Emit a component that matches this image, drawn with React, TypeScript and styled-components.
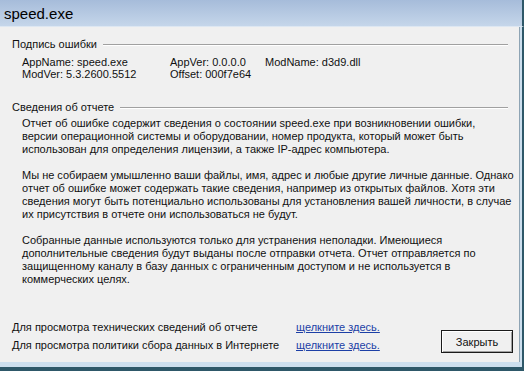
import React from 'react';
import styled, { createGlobalStyle } from 'styled-components';

const GlobalStyle = createGlobalStyle`
  html, body { margin: 0; padding: 0; background: #f0f0f0; }
  body { width: 524px; height: 371px; overflow: hidden; }
`;

const Window = styled.div`
  width: 524px;
  height: 371px;
  display: flex;
  flex-direction: column;
  font-family: "Liberation Sans", Arial, sans-serif;
  font-size: 11px;
  color: #111;
`;

const TitleBar = styled.div`
  height: 26px;
  flex: none;
  display: flex;
  align-items: center;
  padding-left: 4px;
  background: linear-gradient(#a6bcda, #c5d6ea);
  border-bottom: 1px solid #dde7f2;
  border-right: 2px solid #2e5869;
  font-size: 15px;
  color: #000;
`;

const Frame = styled.div`
  flex: 1;
  display: flex;
  flex-direction: column;
  background: #cddfee;
  border-right: 2px solid #2e5869;
  border-bottom: 4px solid #2e5869;
  padding: 0 2px 5px 0;
  min-height: 0;
`;

const Client = styled.div`
  flex: 1;
  background: #f0f0f0;
  border-right: 1px solid #8ea4b4;
  padding: 11px 6px 8px 12px;
  display: flex;
  flex-direction: column;
`;

const GroupHeader = styled.div<{ $top?: number }>`
  display: flex;
  align-items: center;
  gap: 6px;
  margin-right: 5px;
  margin-top: ${p => p.$top ?? 0}px;
  line-height: 13px;
`;

const Rule = styled.div`
  flex: 1;
  height: 0;
  border-top: 1px solid #a0a0a0;
  border-bottom: 1px solid #ffffff;
`;

const InfoGrid = styled.div`
  display: grid;
  grid-template-columns: 148px 95px auto;
  margin: 5px 0 0 10px;
  line-height: 12px;
  white-space: nowrap;
`;

const Paragraph = styled.p<{ $top: number }>`
  margin: ${p => p.$top}px 0 0 10px;
  line-height: 13px;
`;

const Line = styled.span`
  display: block;
  white-space: nowrap;
`;

const Spacer = styled.div`
  flex: 1;
`;

const Footer = styled.div`
  display: flex;
  align-items: flex-end;
  justify-content: space-between;
`;

const LinkGrid = styled.div`
  display: grid;
  grid-template-columns: 284px auto;
  grid-auto-rows: 18px;
  align-items: center;
  white-space: nowrap;
`;

const Link = styled.a`
  color: #1c3fa6;
  text-decoration: underline;
  cursor: pointer;
`;

const Button = styled.button`
  width: 72px;
  height: 23px;
  margin-bottom: 1px;
  padding: 0;
  background: #f0f0f0;
  border: 1px solid #1a1a1a;
  box-shadow: inset 1px 1px 0 #ffffff, inset -1px -1px 0 #a0a0a0;
  font-family: "Liberation Sans", Arial, sans-serif;
  font-size: 11px;
  color: #111;
`;

const paragraphs: string[][] = [
  [
    'Отчет об ошибке содержит сведения о состоянии speed.exe при возникновении ошибки,',
    'версии операционной системы и оборудовании, номер продукта, который может быть',
    'использован для определения лицензии, а также IP-адрес компьютера.',
  ],
  [
    'Мы не собираем умышленно ваши файлы, имя, адрес и любые другие личные данные. Однако',
    'отчет об ошибке может содержать такие сведения, например из открытых файлов. Хотя эти',
    'сведения могут быть потенциально использованы для установления вашей личности, в случае',
    'их присутствия в отчете они использоваться не будут.',
  ],
  [
    'Собранные данные используются только для устранения неполадки. Имеющиеся',
    'дополнительные сведения будут выданы после отправки отчета. Отчет отправляется по',
    'защищенному каналу в базу данных с ограниченным доступом и не используется в',
    'коммерческих целях.',
  ],
];

export default function App() {
  return (
    <>
      <GlobalStyle />
      <Window>
        <TitleBar>speed.exe</TitleBar>
        <Frame>
          <Client>
            <GroupHeader>
              <span>Подпись ошибки</span>
              <Rule />
            </GroupHeader>
            <InfoGrid>
              <span>AppName: speed.exe</span>
              <span>AppVer: 0.0.0.0</span>
              <span>ModName: d3d9.dll</span>
              <span>ModVer: 5.3.2600.5512</span>
              <span>Offset: 000f7e64</span>
              <span />
            </InfoGrid>
            <GroupHeader $top={21}>
              <span>Сведения об отчете</span>
              <Rule />
            </GroupHeader>
            {paragraphs.map((lines, i) => (
              <Paragraph key={i} $top={i === 0 ? 3 : 13}>
                {lines.map((l, j) => (
                  <Line key={j}>{l}</Line>
                ))}
              </Paragraph>
            ))}
            <Spacer />
            <Footer>
              <LinkGrid>
                <span>Для просмотра технических сведений об отчете</span>
                <Link>щелкните здесь.</Link>
                <span>Для просмотра политики сбора данных в Интернете</span>
                <Link>щелкните здесь.</Link>
              </LinkGrid>
              <Button>Закрыть</Button>
            </Footer>
          </Client>
        </Frame>
      </Window>
    </>
  );
}
